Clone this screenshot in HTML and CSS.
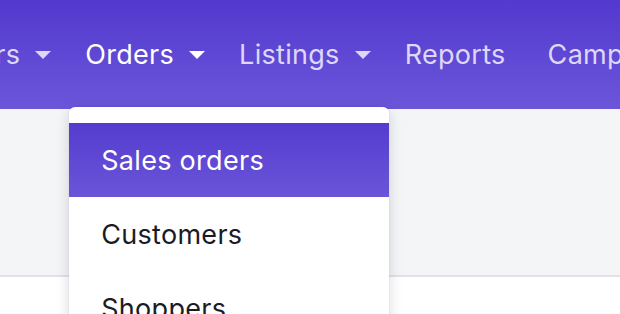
FILE: index.html
```html
<!DOCTYPE html>
<html lang="en">
<head>
    <meta charset="UTF-8">
    <meta name="viewport" content="width=device-width, initial-scale=1.0">
    <title>Orders</title>
    <link rel="stylesheet" href="styles.css">
</head>
<body>
    <header class="topbar">
        <nav class="main-nav">
            <div class="nav-item">
                <a href="#">Vendors</a>
                <svg class="caret" viewBox="0 0 16 8"><path d="M0 0h16L8 8z"/></svg>
            </div>
            <div class="nav-item active">
                <a href="#">Orders</a>
                <svg class="caret" viewBox="0 0 16 8"><path d="M0 0h16L8 8z"/></svg>
                <!-- open menu -->
                <ul class="dropdown">
                    <li class="selected"><a href="#">Sales orders</a></li>
                    <li><a href="#">Customers</a></li>
                    <li><a href="#">Shoppers</a></li>
                </ul>
            </div>
            <div class="nav-item">
                <a href="#">Listings</a>
                <svg class="caret" viewBox="0 0 16 8"><path d="M0 0h16L8 8z"/></svg>
            </div>
            <div class="nav-item">
                <a href="#">Reports</a>
            </div>
            <div class="nav-item">
                <a href="#">Campaigns</a>
            </div>
        </nav>
    </header>
    <section class="toolbar"></section>
    <main class="content"></main>
</body>
</html>
```

FILE: styles.css
```css
body {
    font-family: Inter, "Noto Sans", sans-serif;
    margin: 0;
    padding: 0;
    background-color: #ffffff;
    overflow: hidden;
    height: 314px;
}
.topbar {
    height: 109px;
    background: linear-gradient(#5339cf, #6b56d9);
    overflow: visible;
}
.main-nav {
    display: flex;
    align-items: center;
    height: 109px;
    margin-left: -109px;
    white-space: nowrap;
}
.nav-item {
    position: relative;
    display: flex;
    align-items: center;
    padding: 0 21px;
}
.nav-item a {
    color: #ddd8f8;
    text-decoration: none;
    font-size: 27px;
    letter-spacing: 0.3px;
}
.nav-item.active > a {
    color: #ffffff;
}
.caret {
    width: 16px;
    height: 8px;
    margin-left: 15px;
    margin-right: -8px;
    fill: #ddd8f8;
}
.nav-item.active .caret {
    fill: #ffffff;
}
.dropdown {
    position: absolute;
    top: 69px;
    left: 5px;
    width: 320px;
    margin: 0;
    padding: 16px 0 0;
    list-style: none;
    background: #ffffff;
    border-radius: 6px;
    box-shadow: 0 4px 14px rgba(20, 20, 50, 0.16), 0 0 2px rgba(20, 20, 50, 0.08);
    z-index: 10;
}
.dropdown li {
    height: 74px;
    display: flex;
    align-items: center;
    padding: 0 32px;
}
.dropdown li a {
    color: #1b1b26;
    font-size: 27px;
    letter-spacing: 0.3px;
}
.dropdown li.selected {
    background: linear-gradient(#553ccf, #6a55d8);
}
.dropdown li.selected a {
    color: #ffffff;
}
.toolbar {
    height: 166px;
    background-color: #f4f5f7;
    border-bottom: 2px solid #e1e1e7;
}
.content {
    background: #ffffff;
}
```
